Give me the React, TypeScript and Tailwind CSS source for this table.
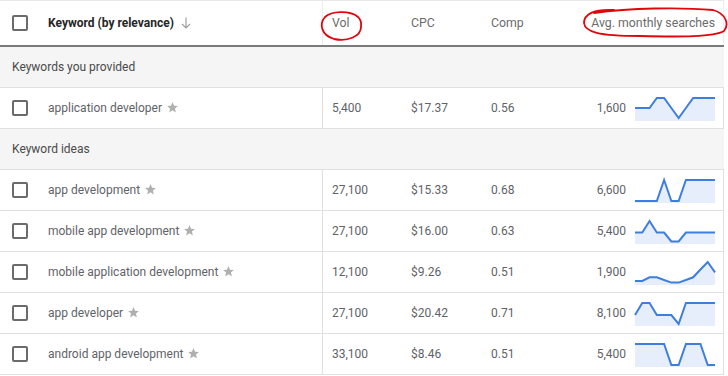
import React from "react";

type Row = {
  keyword: string;
  vol: string;
  cpc: string;
  comp: string;
  avg: string;
  trend: number[];
};

const provided: Row[] = [
  {
    keyword: "application developer",
    vol: "5,400",
    cpc: "$17.37",
    comp: "0.56",
    avg: "1,600",
    trend: [11, 11, 11, 1, 1, 11, 21, 11, 1, 1, 1, 1],
  },
];

const ideas: Row[] = [
  {
    keyword: "app development",
    vol: "27,100",
    cpc: "$15.33",
    comp: "0.68",
    avg: "6,600",
    trend: [22, 22, 22, 22, 1, 22, 22, 1, 1, 1, 1, 1],
  },
  {
    keyword: "mobile app development",
    vol: "27,100",
    cpc: "$16.00",
    comp: "0.63",
    avg: "5,400",
    trend: [12.5, 12.5, 1, 12.5, 12.5, 21.5, 21.5, 12.5, 12.5, 12.5, 12.5, 12.5],
  },
  {
    keyword: "mobile application development",
    vol: "12,100",
    cpc: "$9.26",
    comp: "0.51",
    avg: "1,900",
    trend: [20, 20, 16.3, 16.3, 19, 21.6, 21.6, 19, 16.3, 8.5, 1, 11.3],
  },
  {
    keyword: "app developer",
    vol: "27,100",
    cpc: "$20.42",
    comp: "0.71",
    avg: "8,100",
    trend: [13, 1, 1, 13, 13, 13, 22, 1, 1, 1, 1, 1],
  },
  {
    keyword: "android app development",
    vol: "33,100",
    cpc: "$8.46",
    comp: "0.51",
    avg: "5,400",
    trend: [1, 1, 1, 1, 1, 22, 22, 1, 1, 1, 22, 22],
  },
];

function Checkbox() {
  return <div className="w-4 h-4 shrink-0 rounded-[2px] border-2 border-[#6b6b6b] bg-white" />;
}

function Star() {
  return (
    <svg width="13" height="13" viewBox="0 0 24 24" className="ml-[4px] mb-[1px]">
      <path
        d="M12 17.27L18.18 21l-1.64-7.03L22 9.24l-7.19-.61L12 2 9.19 8.63 2 9.24l5.46 4.73L5.82 21z"
        fill="#b0b0b0"
      />
    </svg>
  );
}

function Spark({ data }: { data: number[] }) {
  const pts = data.map((v, i) => `${((i * 80) / 11).toFixed(2)},${v}`);
  const line = pts.join(" ");
  const area = `0,24 ${line} 80,24`;
  return (
    <svg width="80" height="24" viewBox="0 0 80 24" className="ml-[9px] mt-[2px] overflow-visible">
      <polygon points={area} fill="#e6eefb" />
      <polyline points={line} fill="none" stroke="#3d7ee0" strokeWidth="2" strokeLinejoin="miter" />
    </svg>
  );
}

function DataRow({ row }: { row: Row }) {
  return (
    <div className="flex h-[41px] border-b border-[#e0e0e0] text-[12px] text-[#5f6368]">
      <div className="w-[323px] flex items-center pl-3 border-r border-[#e0e0e0]">
        <Checkbox />
        <span className="ml-5">{row.keyword}</span>
        <Star />
      </div>
      <div className="w-[78px] flex items-center pl-[9px]">{row.vol}</div>
      <div className="w-[80px] flex items-center pl-[10px]">{row.cpc}</div>
      <div className="w-[80px] flex items-center pl-[10px]">{row.comp}</div>
      <div className="w-[163px] flex items-center justify-end pr-2 border-r border-[#e0e0e0]">
        <span>{row.avg}</span>
        <Spark data={row.trend} />
      </div>
    </div>
  );
}

function Band({ label }: { label: string }) {
  return (
    <div className="h-[41px] flex items-center pl-3 bg-[#f5f5f5] border-b border-[#e0e0e0] text-[12px] text-[#4a4a4a]">
      {label}
    </div>
  );
}

export default function App() {
  return (
    <div className="w-[728px] h-[376px] bg-white overflow-hidden font-['Roboto',sans-serif] relative">
      <div className="w-[724px]">
        <div className="flex h-[47px] border-t border-[#e8e8e8] border-b-2 border-b-[#7a7a7a] text-[12.3px] text-[#6b6b6b]">
          <div className="w-[323px] flex items-center pl-3 border-r border-[#ececec]">
            <Checkbox />
            <span className="ml-5 text-[12px] font-bold text-[#262626]">Keyword (by relevance)</span>
            <svg width="10" height="12" viewBox="0 0 10 12" className="ml-[7px]">
              <path d="M5 0.5V11 M1 7 L5 11 L9 7" fill="none" stroke="#a0a0a0" strokeWidth="1.2" />
            </svg>
          </div>
          <div className="w-[78px] flex items-center pl-[9px]">Vol</div>
          <div className="w-[80px] flex items-center pl-[10px]">CPC</div>
          <div className="w-[80px] flex items-center pl-[10px]">Comp</div>
          <div className="w-[163px] flex items-center justify-end pr-2 border-r border-[#ececec]">
            Avg. monthly searches
          </div>
        </div>

        <Band label="Keywords you provided" />
        {provided.map((r) => (
          <DataRow key={r.keyword} row={r} />
        ))}
        <Band label="Keyword ideas" />
        {ideas.map((r) => (
          <DataRow key={r.keyword} row={r} />
        ))}
      </div>

      {/* red hand-drawn circles */}
      <svg width="728" height="50" viewBox="0 0 728 50" className="absolute left-0 top-0 pointer-events-none">
        <path
          d="M358 17 C350 10, 331 11, 325 17 C319 24, 321 35, 334 39 C348 42, 361 36, 361 27 C362 20, 358 15, 350 13"
          fill="none"
          stroke="#e0060b"
          strokeWidth="1.8"
          strokeLinecap="round"
        />
        <path
          d="M614 10 C592 9, 584 15, 584 23 C585 32, 598 36, 640 36 C680 37, 714 37, 724 31 C729 25, 727 14, 713 10 C680 7, 630 8, 594 13"
          fill="none"
          stroke="#e0060b"
          strokeWidth="1.8"
          strokeLinecap="round"
        />
      </svg>
    </div>
  );
}
